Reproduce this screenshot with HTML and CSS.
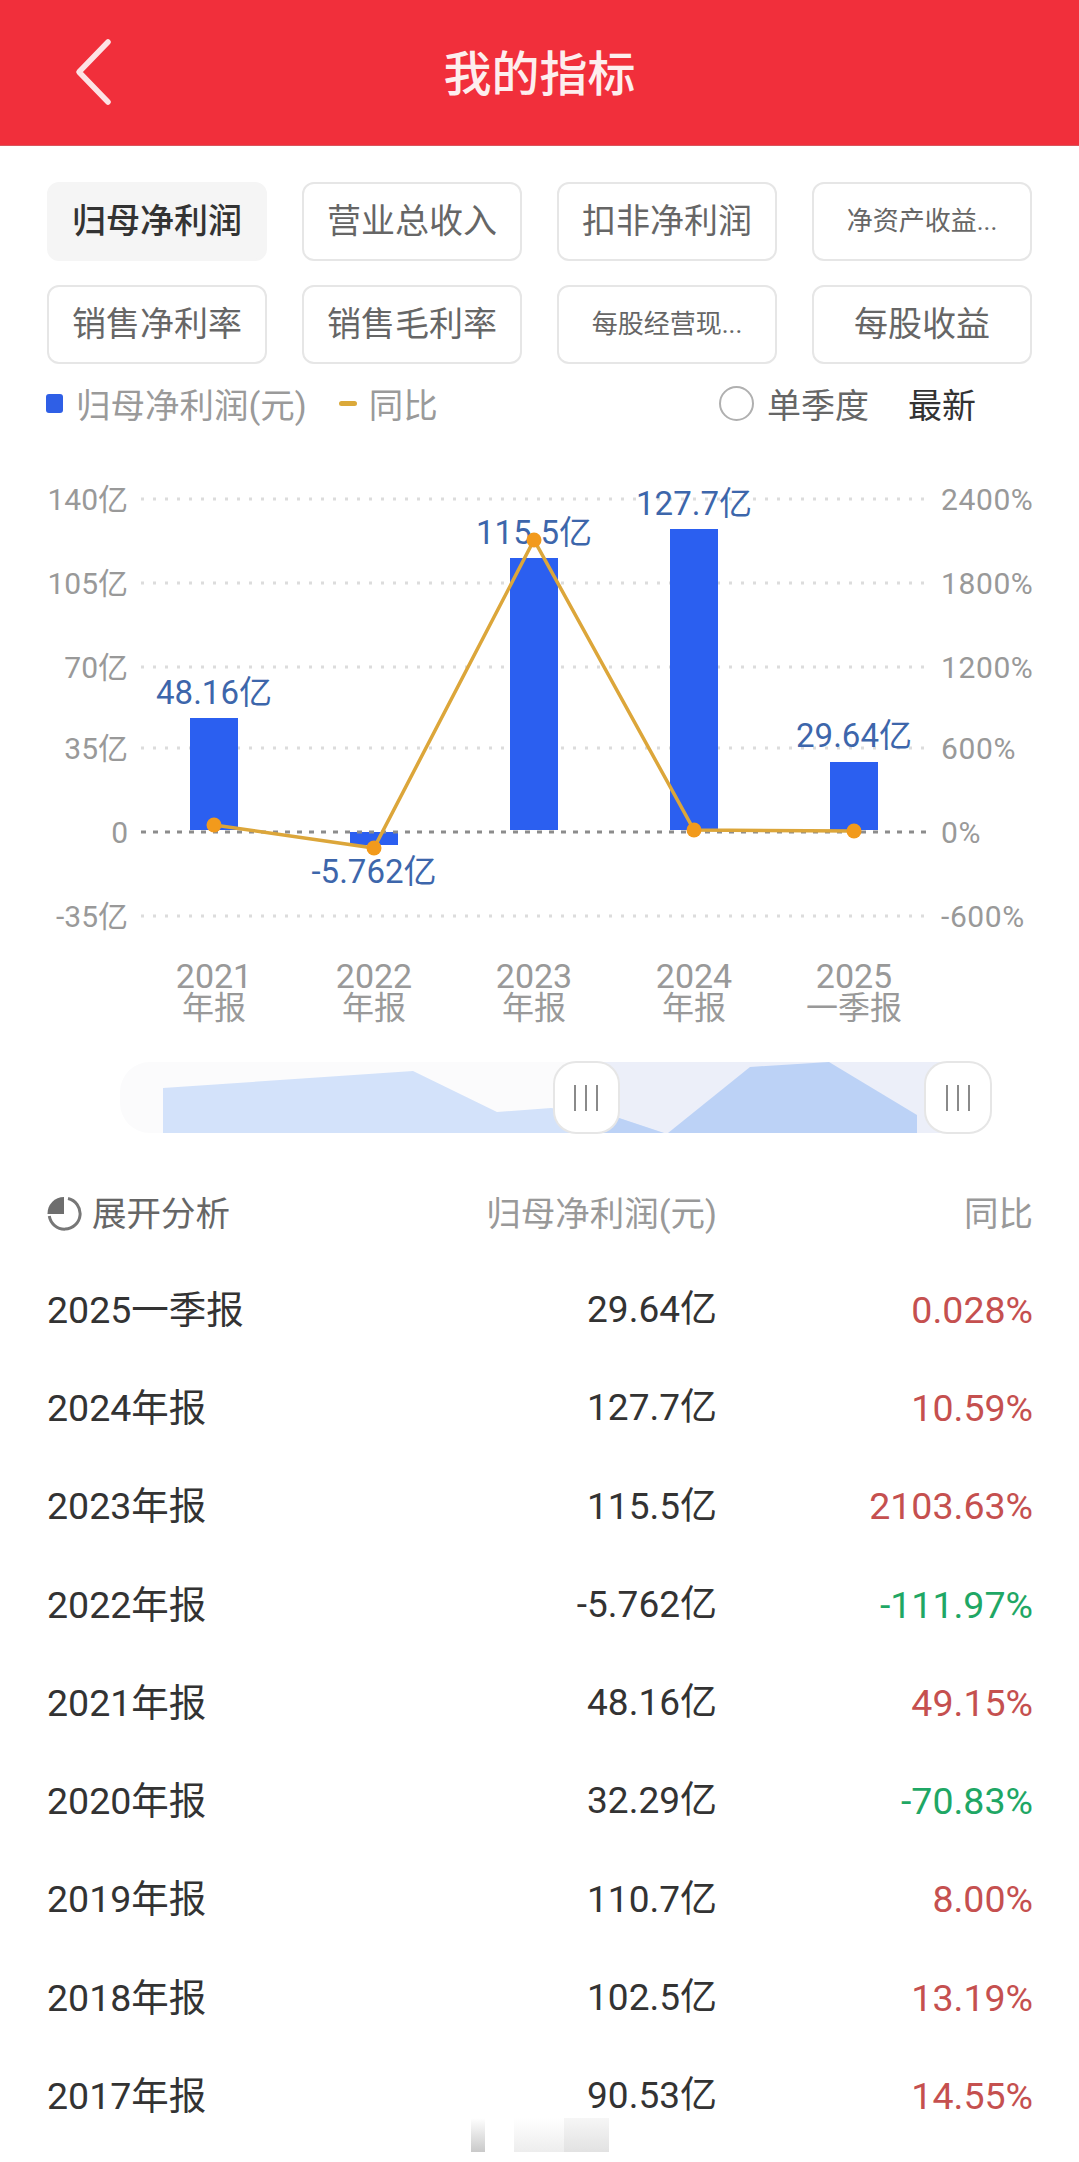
FILE: index.html
```html
<!DOCTYPE html>
<html lang="zh-CN">
<head>
  <meta charset="UTF-8" />
  <title>我的指标</title>
  <link rel="stylesheet" href="styles.css">
</head>
<body>

<header class="topbar">
  <svg class="back-icon" width="40" height="68" viewBox="0 0 40 68">
    <path d="M34 4 L5 34 L34 64" />
  </svg>
  <h1>我的指标</h1>
</header>

<section class="tabs">
  <div class="tab active">归母净利润</div>
  <div class="tab">营业总收入</div>
  <div class="tab">扣非净利润</div>
  <div class="tab small">净资产收益...</div>
  <div class="tab">销售净利率</div>
  <div class="tab">销售毛利率</div>
  <div class="tab small">每股经营现...</div>
  <div class="tab">每股收益</div>
</section>

<section class="legend">
  <div class="legend-group">
    <span class="swatch-bar"></span>
    <span class="legend-label">归母净利润(元)</span>
    <span class="swatch-line"></span>
    <span class="legend-label">同比</span>
  </div>
  <div class="legend-group right">
    <span class="radio"></span>
    <span class="legend-quarter">单季度</span>
    <span class="legend-latest">最新</span>
  </div>
</section>

<svg class="chart" width="1079" height="600" viewBox="0 460 1079 600">
  <g class="grid">
    <line x1="141" x2="929" y1="499" y2="499" />
    <line x1="141" x2="929" y1="583" y2="583" />
    <line x1="141" x2="929" y1="667" y2="667" />
    <line x1="141" x2="929" y1="748" y2="748" />
    <line x1="141" x2="929" y1="916" y2="916" />
  </g>

  <g class="axis-left">
    <text x="128" y="499">140亿</text>
    <text x="128" y="583">105亿</text>
    <text x="128" y="667">70亿</text>
    <text x="128" y="748">35亿</text>
    <text x="128" y="832">0</text>
    <text x="128" y="916">-35亿</text>
  </g>
  <g class="axis-right">
    <text x="941" y="499">2400%</text>
    <text x="941" y="583">1800%</text>
    <text x="941" y="667">1200%</text>
    <text x="941" y="748">600%</text>
    <text x="941" y="832">0%</text>
    <text x="941" y="916">-600%</text>
  </g>

  <g class="bars">
    <rect x="190" y="718" width="48" height="112" />
    <rect x="350" y="832" width="48" height="13" />
    <rect x="510" y="558" width="48" height="272" />
    <rect x="670" y="529" width="48" height="301" />
    <rect x="830" y="762" width="48" height="68" />
  </g>
  <line class="zero-line" x1="141" x2="929" y1="832" y2="832" />

  <g class="bar-labels">
    <text x="214" y="692">48.16亿</text>
    <text x="374" y="871">-5.762亿</text>
    <text x="534" y="532">115.5亿</text>
    <text x="694" y="503">127.7亿</text>
    <text x="854" y="735">29.64亿</text>
  </g>

  <polyline class="trend" points="214,825 374,848 534,540 694,830 854,831" />
  <g class="dots">
    <circle cx="214" cy="825" r="7.5" />
    <circle cx="374" cy="848" r="7.5" />
    <circle cx="534" cy="540" r="7.5" />
    <circle cx="694" cy="830" r="7.5" />
    <circle cx="854" cy="831" r="7.5" />
  </g>

  <g class="axis-x">
    <text class="year" x="214" y="976">2021</text><text x="214" y="1008">年报</text>
    <text class="year" x="374" y="976">2022</text><text x="374" y="1008">年报</text>
    <text class="year" x="534" y="976">2023</text><text x="534" y="1008">年报</text>
    <text class="year" x="694" y="976">2024</text><text x="694" y="1008">年报</text>
    <text class="year" x="854" y="976">2025</text><text x="854" y="1008">一季报</text>
  </g>
</svg>

<svg class="slider" width="1079" height="84" viewBox="0 1056 1079 84">
  <rect class="slider-track" x="120" y="1062" width="870" height="71" rx="30" />
  <rect class="slider-range" x="586" y="1062" width="372" height="71" />
  <polygon class="slider-area" points="163,1088 413,1071 497,1112 551,1108 619,1118 664,1133 163,1133" />
  <polygon class="slider-area-on" points="586,1105 619,1118 664,1133 586,1133" />
  <polygon class="slider-area-on" points="668,1133 750,1067 829,1062 917,1115 917,1133" />
  <rect class="slider-handle" x="554" y="1062" width="65" height="71" rx="22" />
  <rect class="slider-handle" x="925" y="1062" width="66" height="71" rx="22" />
  <path class="slider-grip" d="M575 1085V1111M586 1085V1111M597 1085V1111M947 1085V1111M958 1085V1111M969 1085V1111" />
</svg>

<section class="table">
  <div class="table-head">
    <div class="expand">
      <svg width="35" height="36" viewBox="0 0 35 36">
        <path class="pie-ring" d="M21 2.5 A15.5 15.5 0 1 1 2.3 20" />
        <path class="pie-fill" d="M17 1 V18 H0.5 A16.5 16.5 0 0 1 17 1 Z" />
      </svg>
      <span>展开分析</span>
    </div>
    <div class="cell-num">归母净利润(元)</div>
    <div class="cell-num">同比</div>
  </div>

  <div class="row"><div>2025一季报</div><div class="cell-num value">29.64亿</div><div class="cell-num up">0.028%</div></div>
  <div class="row"><div>2024年报</div><div class="cell-num value">127.7亿</div><div class="cell-num up">10.59%</div></div>
  <div class="row"><div>2023年报</div><div class="cell-num value">115.5亿</div><div class="cell-num up">2103.63%</div></div>
  <div class="row"><div>2022年报</div><div class="cell-num value">-5.762亿</div><div class="cell-num down">-111.97%</div></div>
  <div class="row"><div>2021年报</div><div class="cell-num value">48.16亿</div><div class="cell-num up">49.15%</div></div>
  <div class="row"><div>2020年报</div><div class="cell-num value">32.29亿</div><div class="cell-num down">-70.83%</div></div>
  <div class="row"><div>2019年报</div><div class="cell-num value">110.7亿</div><div class="cell-num up">8.00%</div></div>
  <div class="row"><div>2018年报</div><div class="cell-num value">102.5亿</div><div class="cell-num up">13.19%</div></div>
  <div class="row"><div>2017年报</div><div class="cell-num value">90.53亿</div><div class="cell-num up">14.55%</div></div>
</section>

<div class="mosaic">
  <span class="m1"></span>
  <span class="m2"></span>
  <span class="m3"></span>
  <span class="m4"></span>
</div>

</body>
</html>
```

FILE: styles.css
```css
body {
  margin: 0;
  background: #fff;
  color: #333;
  font-family: "Roboto", "Noto Sans CJK SC", sans-serif;
  position: relative;
  height: 2162px;
  overflow: hidden;
}

/* top bar */
.topbar {
  height: 146px;
  background: #f12f3b;
  border-bottom: 1px solid #d9555c;
  box-sizing: border-box;
  display: flex;
  align-items: center;
  justify-content: center;
  padding-bottom: 5px;
  position: relative;
}
.topbar h1 {
  margin: 0;
  color: #fdeeee;
  font-size: 48px;
  font-weight: 500;
}
.back-icon {
  position: absolute;
  left: 74px;
  top: 38px;
}
.back-icon path {
  fill: none;
  stroke: #fde3e5;
  stroke-width: 5.5;
  stroke-linecap: round;
  stroke-linejoin: round;
}

/* tabs */
.tabs {
  display: grid;
  grid-template-columns: repeat(4, 220px);
  grid-auto-rows: 79px;
  column-gap: 35px;
  row-gap: 24px;
  padding: 36px 47px 0;
}
.tab {
  display: flex;
  align-items: center;
  justify-content: center;
  border: 2px solid #e6e6e6;
  border-radius: 12px;
  box-sizing: border-box;
  padding-bottom: 7px;
  font-size: 34px;
  color: #666;
  white-space: nowrap;
}
.tab.active {
  background: #f5f5f5;
  border-color: #f5f5f5;
  color: #333;
  font-weight: 500;
}
.tab.small {
  font-size: 26px;
}

/* legend */
.legend {
  display: flex;
  justify-content: space-between;
  align-items: center;
  height: 58px;
  margin-top: 10px;
  padding: 0 103px 0 46px;
}
.legend-group {
  display: flex;
  align-items: center;
}
.swatch-bar {
  width: 17px;
  height: 19px;
  background: #2f5fe6;
  border-radius: 3px;
  margin-right: 13px;
}
.swatch-line {
  width: 18px;
  height: 5px;
  background: #dba93a;
  border-radius: 3px;
  margin: 0 12px 0 32px;
}
.legend-label {
  font-size: 34.5px;
  color: #9a9a9a;
}
.radio {
  width: 31px;
  height: 31px;
  border: 2px solid #b0b0b0;
  border-radius: 50%;
  margin-right: 13px;
}
.legend-quarter {
  font-size: 34px;
  color: #666;
  margin-right: 39px;
}
.legend-latest {
  font-size: 34px;
  color: #333;
}

/* chart */
.chart {
  display: block;
  margin-top: 28px;
}
.grid line {
  stroke: #dcdcdc;
  stroke-width: 3;
  stroke-dasharray: 3 9;
}
.zero-line {
  stroke: #8c8c8c;
  stroke-width: 3;
  stroke-dasharray: 5 7;
}
.axis-left text,
.axis-right text,
.axis-x text {
  fill: #999;
  font-size: 30px;
  dominant-baseline: central;
}
.axis-left text {
  text-anchor: end;
}
.axis-right text {
  letter-spacing: 0.6px;
}
.axis-x text {
  text-anchor: middle;
  font-size: 32px;
}
.axis-x .year {
  font-size: 34px;
}
.bars rect {
  fill: #2b5ff0;
}
.bar-labels text {
  fill: #3d66ab;
  font-size: 33px;
  text-anchor: middle;
  dominant-baseline: central;
}
.trend {
  fill: none;
  stroke: #dca63a;
  stroke-width: 3.5;
}
.dots circle {
  fill: #f29a1c;
}

/* range slider */
.slider {
  display: block;
  margin-top: -4px;
}
.slider-track {
  fill: #fbfbfc;
}
.slider-range {
  fill: #eceff9;
}
.slider-area {
  fill: #d3e2fa;
}
.slider-area-on {
  fill: #bcd2f6;
}
.slider-handle {
  fill: #fff;
  stroke: #e6e6e6;
  stroke-width: 2;
}
.slider-grip {
  fill: none;
  stroke: #8a8a8a;
  stroke-width: 2;
}

/* table */
.table {
  margin-top: 44px;
}
.table-head,
.row {
  display: grid;
  grid-template-columns: 300px 370px 316px;
  padding: 0 47px;
  align-items: center;
  line-height: 1.3;
}
.table-head {
  height: 60px;
  margin-bottom: 17px;
  font-size: 34.5px;
  color: #999;
}
.row {
  height: 98.25px;
  font-size: 37.5px;
  color: #333;
}
.cell-num {
  text-align: right;
}
.value {
  font-size: 37px;
}
.expand {
  display: flex;
  align-items: center;
  gap: 10px;
  color: #666;
}
.pie-ring {
  fill: none;
  stroke: #777;
  stroke-width: 3;
}
.pie-fill {
  fill: #6e6e6e;
}
.up {
  color: #c5504f;
}
.down {
  color: #1fa765;
}

/* blurred patch at the bottom edge */
.mosaic {
  position: absolute;
  left: 471px;
  top: 2118px;
  width: 138px;
  height: 34px;
  display: flex;
}
.mosaic span {
  display: block;
  height: 100%;
}
.m1 {
  width: 14px;
  background: linear-gradient(#fff, #c9c9c9);
}
.m2 {
  width: 29px;
}
.m3 {
  width: 50px;
  background: linear-gradient(#fff, #ededed);
}
.m4 {
  width: 45px;
  background: linear-gradient(#f6f6f6, #e2e2e2);
}
```
